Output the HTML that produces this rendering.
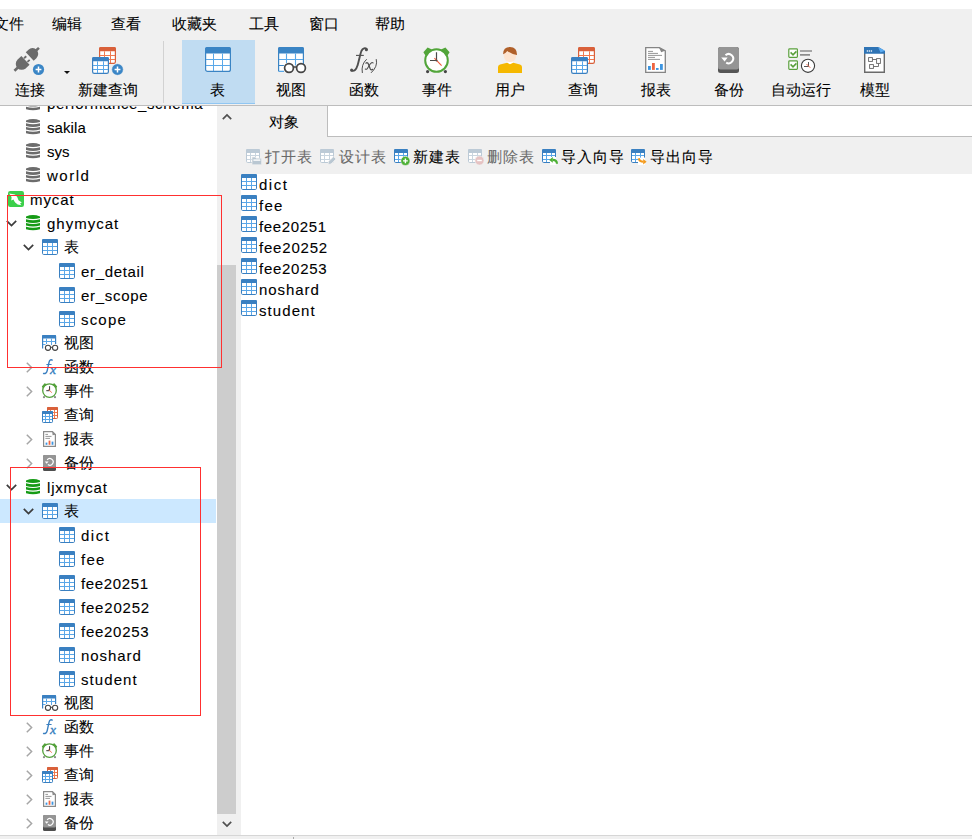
<!DOCTYPE html>
<html><head><meta charset="utf-8">
<style>
*{margin:0;padding:0;box-sizing:border-box}
html,body{width:972px;height:839px;overflow:hidden;background:#f0f0f0}
body{position:relative;font-family:"Liberation Sans",sans-serif;font-size:15px;color:#000}
.a{position:absolute}
.t{position:absolute;white-space:nowrap;line-height:20px;-webkit-text-stroke:0.08px currentColor}
.l{-webkit-text-stroke:0.1px currentColor}
svg{position:absolute;overflow:visible}
.g{color:#8a8a8a}
</style></head><body>

<svg width="0" height="0" style="left:0;top:0">
<defs>
<symbol id="tbl" viewBox="0 0 16 16" overflow="visible">
<rect x="0.5" y="0.5" width="15" height="15" rx="1.2" fill="#fff" stroke="#3a80c1"/>
<rect x="0" y="0" width="16" height="4" rx="1.2" fill="#3a80c1"/>
<path d="M5.5 4V15M10.5 4V15M1 7.5H15M1 11.5H15" stroke="#5aa7e8" stroke-width="1"/>
</symbol>
<symbol id="db" viewBox="0 0 14 16" overflow="visible">
<path d="M0 1.4 Q7 -1.4 14 1.4 V3 Q7 5 0 3 Z"/><path d="M0 4.3 Q7 6.3 14 4.3 V6.9 Q7 8.9 0 6.9 Z"/><path d="M0 8 Q7 10 14 8 V10.6 Q7 12.6 0 10.6 Z"/><path d="M0 11.7 Q7 13.7 14 11.7 V14.3 Q7 16.3 0 14.3 Z"/>
</symbol>
<symbol id="chd" viewBox="0 0 11 7" overflow="visible"><path d="M0.8 0.8L5.5 5.5L10.2 0.8" fill="none" stroke="#3c3c3c" stroke-width="1.7"/></symbol>
<symbol id="chr" viewBox="0 0 7 11" overflow="visible"><path d="M0.8 0.8L5.6 5.5L0.8 10.2" fill="none" stroke="#a6a6a6" stroke-width="1.5"/></symbol>
</defs></svg>

<div class="a" style="left:0;top:0;width:972px;height:9px;background:#fff"></div>
<div class="t" style="left:-6px;top:14px">文件</div>
<div class="t" style="left:52px;top:14px">编辑</div>
<div class="t" style="left:111px;top:14px">查看</div>
<div class="t" style="left:172px;top:14px">收藏夹</div>
<div class="t" style="left:249px;top:14px">工具</div>
<div class="t" style="left:309px;top:14px">窗口</div>
<div class="t" style="left:375px;top:14px">帮助</div>
<div class="a" style="left:182px;top:40px;width:73px;height:64px;background:#c0dcf2;border-bottom:1px solid #90c6f2"></div>
<div class="a" style="left:163px;top:41px;width:1px;height:62px;background:#d2d2d2"></div>
<div class="a" style="left:0;top:105px;width:972px;height:1px;background:#bdbdbd"></div>
<div class="t" style="left:15px;top:80px">连接</div>
<div class="t" style="left:78px;top:80px">新建查询</div>
<div class="t" style="left:210px;top:80px">表</div>
<div class="t" style="left:276px;top:80px">视图</div>
<div class="t" style="left:349px;top:80px">函数</div>
<div class="t" style="left:422px;top:80px">事件</div>
<div class="t" style="left:495px;top:80px">用户</div>
<div class="t" style="left:568px;top:80px">查询</div>
<div class="t" style="left:641px;top:80px">报表</div>
<div class="t" style="left:714px;top:80px">备份</div>
<div class="t" style="left:771px;top:80px">自动运行</div>
<div class="t" style="left:860px;top:80px">模型</div>
<svg style="left:10px;top:42px" width="40" height="36" viewBox="0 0 40 36">
<g fill="#6b6b6b">
<g transform="translate(17.6,16.4) rotate(-43)">
<path d="M2.9 -5.8 H6.6 A5.8 5.8 0 0 1 6.6 5.8 H2.9 Z"/>
<rect x="10.5" y="-1.3" width="5" height="2.6"/>
<path d="M-2.9 -6 H-8 A6 6 0 0 0 -8 6 H-2.9 Z"/>
<rect x="-2.5" y="-3.4" width="3" height="1.8"/>
<rect x="-2.5" y="1.6" width="3" height="1.8"/>
<rect x="-18" y="-1.3" width="5.5" height="2.6"/>
</g></g>
<circle cx="28.5" cy="27.5" r="5.6" fill="#3b86c6"/>
<path d="M25.6 27.5H31.4M28.5 24.6V30.4" stroke="#fff" stroke-width="1.5"/>
</svg>
<svg style="left:64px;top:71px" width="6" height="3" viewBox="0 0 6 3"><path d="M0 0H6L3 3Z" fill="#111"/></svg>
<svg style="left:99px;top:47px" width="17" height="17" viewBox="0 0 17 17"><rect x="0.6" y="0.6" width="15.8" height="15.8" rx="1.6" fill="#fff" stroke="#d9603a" stroke-width="1.2"/><path d="M0 4.3 V1.6 Q0 0 1.6 0 H15.4 Q17 0 17 1.6 V4.3 Z" fill="#d9603a"/><path d="M5.5 4.3 V16M11.5 4.3 V16M1 8.5 H16M1 12.5 H16" stroke="#f07a50" stroke-width="1"/></svg>
<svg style="left:92px;top:57px" width="17" height="17" viewBox="0 0 17 17"><rect x="0.6" y="0.6" width="15.8" height="15.8" rx="1.6" fill="#fff" stroke="#3a80c1" stroke-width="1.2"/><path d="M0 4.3 V1.6 Q0 0 1.6 0 H15.4 Q17 0 17 1.6 V4.3 Z" fill="#3a80c1"/><path d="M5.5 4.3 V16M11.5 4.3 V16M1 8.5 H16M1 12.5 H16" stroke="#5aa7e8" stroke-width="1"/></svg>
<svg style="left:111px;top:63px" width="13" height="13" viewBox="0 0 13 13"><circle cx="6.5" cy="6.5" r="5.8" fill="#3b86c6" stroke="#f0f0f0" stroke-width="0.6"/><path d="M3.6 6.5H9.4M6.5 3.6V9.4" stroke="#fff" stroke-width="1.5"/></svg>
<svg style="left:205px;top:47px" width="26" height="25" viewBox="0 0 26 25"><rect x="0.6" y="0.6" width="24.8" height="23.8" rx="2" fill="#fff" stroke="#3a84c4" stroke-width="1.2"/><path d="M0 6.5 V2 Q0 0 2 0 H24 Q26 0 26 2 V6.5 Z" fill="#3a84c4"/><path d="M8.5 6.5 V24M17.5 6.5 V24M1 12.5 H25M1 18.5 H25" stroke="#5aa8e8" stroke-width="1"/></svg>
<svg style="left:278px;top:47px" width="28" height="27" viewBox="0 0 28 27">
<path d="M0.6 6 H25.4 V18.5 H6 V24.4 H0.6Z" fill="#fff"/>
<path d="M0.6 24.4 V2 Q0.6 0.6 2 0.6 H24 Q25.4 0.6 25.4 2 V17.5" fill="none" stroke="#3a84c4" stroke-width="1.2"/>
<path d="M0 6.5 V2 Q0 0 2 0 H24 Q26 0 26 2 V6.5 Z" fill="#3a84c4"/>
<path d="M8.5 6.5 V16M17.5 6.5 V18.5M1 12.5 H25M1 18.5 H6 M1 24.4 H6" stroke="#5aa8e8" stroke-width="1.1"/>
<path d="M1 18.5 H5.5" stroke="#3a84c4" stroke-width="1"/>
<circle cx="11" cy="21" r="4.4" fill="#fff" stroke="#454545" stroke-width="1.7"/>
<circle cx="23" cy="21" r="4.4" fill="#fff" stroke="#454545" stroke-width="1.7"/>
<path d="M15.4 20 H18.6" stroke="#454545" stroke-width="1.5"/>
</svg>
<svg style="left:345px;top:42px" width="40" height="36" viewBox="0 0 40 36">
<g fill="none" stroke="#4e4e4e" stroke-linecap="round">
<path d="M21.8 7.2 C20.4 5.6 17.8 5.8 16.4 9 C15.2 12 13.7 20 12.5 23.6 C11.3 27.6 9.2 29.6 6.4 28.6" stroke-width="1.9"/>
<path d="M11 13.4 H18.8" stroke-width="1.1" stroke-linecap="butt"/>
<path d="M21.4 17.5 Q15.9 22.6 17.3 30.6" stroke-width="1"/>
<path d="M31.3 17.5 Q33 24.6 26.3 30.6" stroke-width="1"/>
<path d="M20.9 21.2 Q22.5 19.9 23.5 22.2 L25.2 26.8 Q26 28.6 27.9 27.3" stroke-width="1.25"/>
<path d="M28.1 20.9 Q26.7 19.9 25 22.3 L22.7 26 Q21.6 27.9 20.3 27" stroke-width="1.1"/>
</g>
<circle cx="21.4" cy="7.7" r="1.5" fill="#4e4e4e"/>
<circle cx="6.6" cy="28.1" r="1.5" fill="#4e4e4e"/>
</svg>
<svg style="left:424px;top:47px" width="26" height="26" viewBox="0 0 26 26">
<path d="M-0.6 5.2 L3.6 0.6 L8 2.6 L1.6 8.8Z M25.6 5.2 L21.4 0.6 L17 2.6 L23.4 8.8Z" fill="#52a53a"/>
<circle cx="3.6" cy="24.6" r="1.6" fill="#444"/><circle cx="21.4" cy="24.6" r="1.6" fill="#444"/>
<circle cx="12.5" cy="13.5" r="11.3" fill="#fff" stroke="#52a53a" stroke-width="2"/>
<path d="M12.5 5.2V13.5H6" fill="none" stroke="#4a4a4a" stroke-width="1.2"/>
<path d="M10.4 11.2L17.6 18.6" stroke="#f05a3c" stroke-width="1.1"/>
<circle cx="12.5" cy="13.5" r="1" fill="#4a4a4a"/>
</svg>
<svg style="left:490px;top:42px" width="40" height="36" viewBox="0 0 40 36">
<rect x="17.2" y="19" width="6" height="4" fill="#fff"/>
<path d="M8 31 V25 Q8 23.5 10 22.6 L17.2 20.8 L20 22.2 L23.2 20.8 L30 22.6 Q32 23.5 32 25 V31 Z" fill="#f5b800"/>
<ellipse cx="20" cy="13.5" rx="6.3" ry="6.6" fill="#fde4d0"/>
<path d="M13.1 12.2 Q13 4.9 20 4.9 Q27.2 5 27 12.9 Q21.6 12.4 17.3 9.1 Q15.6 11.4 13.1 12.2Z" fill="#b0602a"/>
</svg>
<svg style="left:578px;top:47px" width="17" height="17" viewBox="0 0 17 17"><rect x="0.6" y="0.6" width="15.8" height="15.8" rx="1.6" fill="#fff" stroke="#d9603a" stroke-width="1.2"/><path d="M0 4.3 V1.6 Q0 0 1.6 0 H15.4 Q17 0 17 1.6 V4.3 Z" fill="#d9603a"/><path d="M5.5 4.3 V16M11.5 4.3 V16M1 8.5 H16M1 12.5 H16" stroke="#f07a50" stroke-width="1"/></svg>
<svg style="left:571px;top:57px" width="17" height="17" viewBox="0 0 17 17"><rect x="0.6" y="0.6" width="15.8" height="15.8" rx="1.6" fill="#fff" stroke="#3a80c1" stroke-width="1.2"/><path d="M0 4.3 V1.6 Q0 0 1.6 0 H15.4 Q17 0 17 1.6 V4.3 Z" fill="#3a80c1"/><path d="M5.5 4.3 V16M11.5 4.3 V16M1 8.5 H16M1 12.5 H16" stroke="#5aa7e8" stroke-width="1"/></svg>
<svg style="left:645px;top:47px" width="21" height="26" viewBox="0 0 21 26">
<path d="M0.7 0.7 H14.4 L20.3 3.8 V25.3 H0.7 Z" fill="#fff" stroke="#858585" stroke-width="1.3"/>
<path d="M14 0.5 L20.6 3.6 L16.2 5.2 Z" fill="#858585"/>
<path d="M3 4.4H8M3 6.4H13M3 8.4H17M3 10.4H10M3 12.4H15" stroke="#8a8a8a" stroke-width="0.9"/>
<rect x="3" y="19" width="2.8" height="3.9" fill="#3d95e0"/>
<rect x="7" y="16" width="2.8" height="6.9" fill="#ef6440"/>
<rect x="11" y="21" width="2.6" height="1.9" fill="#3d95e0"/>
<rect x="15" y="17" width="2.8" height="5.9" fill="#3d95e0"/>
</svg>
<svg style="left:718px;top:47px" width="21" height="26" viewBox="0 0 21 26">
<rect x="0" y="0" width="21" height="26" rx="2.5" fill="#555"/>
<rect x="0" y="0" width="21" height="22.5" rx="2.5" fill="#959595"/>
<path d="M7.5 8.2 A4.6 4.6 0 1 1 8.2 15.6" fill="none" stroke="#fff" stroke-width="2"/>
<path d="M3.2 10.4 L9.6 10.4 L6.6 14.4Z" fill="#fff"/>
</svg>
<svg style="left:782px;top:42px" width="40" height="36" viewBox="0 0 40 36">
<rect x="6.8" y="6.8" width="8.6" height="8.6" rx="0.8" fill="#fff" stroke="#5aa03c" stroke-width="1.2"/>
<rect x="6.8" y="18.8" width="8.6" height="8.6" rx="0.8" fill="#fff" stroke="#5aa03c" stroke-width="1.2"/>
<path d="M8.6 10.4 L11 12.8 L14.4 9.4 M8.6 22.4 L11 24.8 L14.4 21.4" fill="none" stroke="#5aa03c" stroke-width="1.6"/>
<path d="M18 9 H30 M18 12.9 H28" stroke="#8c8c8c" stroke-width="1.6"/>
<circle cx="26" cy="23.8" r="6.6" fill="#fff" stroke="#3a3a3a" stroke-width="1.1"/>
<path d="M26.5 20 V24.5 H22" fill="none" stroke="#444" stroke-width="0.9"/>
<path d="M24.5 22 L28.3 25.8" stroke="#f05a3c" stroke-width="0.9"/>
</svg>
<svg style="left:864px;top:47px" width="21" height="26" viewBox="0 0 21 26">
<path d="M0.7 6 V25.3 H20.3 V6" fill="#fff" stroke="#6a6a6a" stroke-width="1.4"/>
<path d="M0 0 H14.5 L21 4 V6.8 H0 Z" fill="#2f74b5"/>
<path d="M14 0 L21 3.8 L16.5 5.5Z" fill="#5aaaf0"/>
<circle cx="3.4" cy="4" r="0.8" fill="#fff"/><circle cx="5.4" cy="4" r="0.8" fill="#fff"/><circle cx="7.4" cy="4" r="0.8" fill="#fff"/>
<rect x="4.6" y="10.6" width="3.8" height="3.8" fill="#fff" stroke="#666" stroke-width="0.9"/>
<rect x="12.6" y="11.6" width="3.8" height="4.8" fill="#fff" stroke="#666" stroke-width="0.9"/>
<rect x="5.6" y="17.6" width="3.8" height="3.8" fill="#fff" stroke="#666" stroke-width="0.9"/>
<path d="M8.5 12.5 H12.5 M14.5 16.4 V19.5 H9.5" fill="none" stroke="#666" stroke-width="0.9"/>
</svg>
<div class="a" style="left:0;top:106px;width:217px;height:729px;background:#fff"></div>
<svg width="0" height="0" style="left:0;top:0"><defs>
<symbol id="sview" viewBox="0 0 16 16" overflow="visible">
<path d="M0.6 13.4 V1.4 Q0.6 0.6 1.4 0.6 H13 Q13.6 0.6 13.6 1.4 V9" fill="none" stroke="#3a80c1" stroke-width="1.2"/>
<path d="M0 3.4 V1.2 Q0 0 1.2 0 H12.8 Q14 0 14 1.2 V3.4 Z" fill="#3a80c1"/>
<path d="M4.5 3.5V9M9.5 3.5V10M1 6.5H13.4M1 9.5H3.5" stroke="#5aa7e8" stroke-width="1"/>
<circle cx="6" cy="12.8" r="2.6" fill="#fff" stroke="#444" stroke-width="1.1"/>
<circle cx="13.1" cy="12.8" r="2.6" fill="#fff" stroke="#444" stroke-width="1.1"/>
<path d="M8.6 12.3 H10.5" stroke="#444" stroke-width="1"/>
</symbol>
<symbol id="sfx" viewBox="0 0 16 16" overflow="visible">
<path d="M10.6 1.4 C9.2 0 7.6 0.8 7 3.4 L5.2 11.6 C4.7 14 3.4 15 1 14.3" fill="none" stroke="#3a7fc0" stroke-width="1.4"/>
<path d="M4.4 5.5 H9.6" stroke="#3a7fc0" stroke-width="1"/>
<text x="8" y="14.6" font-family="Liberation Serif" font-style="italic" font-size="13.5" fill="#3a7fc0" stroke="#3a7fc0" stroke-width="0.35">x</text>
</symbol>
<symbol id="sclk" viewBox="0 0 16 16" overflow="visible">
<path d="M-0.2 3.4 L2.6 0.3 L5.4 1.4 L1.2 5.8Z M15.2 3.4 L12.4 0.3 L9.6 1.4 L13.8 5.8Z" fill="#52a03a"/>
<circle cx="2" cy="14.2" r="1.1" fill="#8a8a8a"/><circle cx="13" cy="14.2" r="1.1" fill="#8a8a8a"/>
<circle cx="7.5" cy="7.6" r="6.8" fill="#fff" stroke="#52a03a" stroke-width="1.3"/>
<path d="M7.6 3.2V7.7H4.3" fill="none" stroke="#333" stroke-width="1"/>
<path d="M6.4 6.4 L9.9 9.7" stroke="#f06a4a" stroke-width="0.9"/>
</symbol>
<symbol id="sqry" viewBox="0 0 16 16" overflow="visible">
<rect x="5.5" y="0.5" width="10" height="11" rx="0.8" fill="#fff" stroke="#d9603a"/>
<path d="M5 3 V0.8 Q5 0 5.8 0 H15.2 Q16 0 16 0.8 V3Z" fill="#d9603a"/>
<path d="M8.5 3V11M12.5 3V11M6 5.5H15M6 8.5H15" stroke="#f07a50" stroke-width="1"/>
<rect x="0.5" y="4.5" width="10" height="11" rx="0.8" fill="#fff" stroke="#3a80c1"/>
<path d="M0 7 V4.8 Q0 4 0.8 4 H10.2 Q11 4 11 4.8 V7Z" fill="#3a80c1"/>
<path d="M3.5 7V15M7.5 7V15M1 9.5H10M1 12.5H10" stroke="#5aa7e8" stroke-width="1"/>
</symbol>
<symbol id="srep" viewBox="0 0 16 16" overflow="visible"><g transform="translate(1,0)">
<path d="M0.6 0.6 H9.4 L12.4 3.6 V15.4 H0.6 Z" fill="#fff" stroke="#8a8a8a" stroke-width="1.2"/>
<path d="M9.2 0.6 L12.4 3.8 L9.6 4.2Z" fill="#8a8a8a"/>
<path d="M2.4 3.4H5M2.4 5.4H8.5M2.4 7.4H7" stroke="#8c8c8c" stroke-width="0.9"/>
<rect x="2.6" y="11.6" width="1.8" height="2.2" fill="#3d95e0"/>
<rect x="5.6" y="9.6" width="1.8" height="4.2" fill="#ef6440"/>
<rect x="8.6" y="10.6" width="1.8" height="3.2" fill="#3d95e0"/>
</g></symbol>
<symbol id="sbak" viewBox="0 0 16 16" overflow="visible"><g transform="translate(1,0)">
<rect x="0" y="0" width="13" height="16" rx="1.6" fill="#4e4e4e"/>
<rect x="0" y="0" width="13" height="12.6" rx="1.6" fill="#959595"/>
<path d="M4.2 4.9 A3.3 3.3 0 1 1 4.9 9.6" fill="none" stroke="#fff" stroke-width="1.2"/>
<path d="M1.8 6.4 L5.6 6.4 L3.7 8.8Z" fill="#fff"/>
</g></symbol>
<symbol id="mycat" viewBox="0 0 16 16" overflow="visible">
<rect x="0" y="0" width="16" height="16" rx="2.2" fill="#3bcf4a"/>
<path d="M1.2 2.4 Q4 2.6 7 3.6 Q9.5 5.6 10.5 9.2 L13.8 11.6 L12 12.4 L13.4 14.2 Q9 13.8 7.2 11.4 Q6 10 5.5 8.4 L3.2 9.6 L3.6 6.6 Q3 4.4 1.2 2.4Z" fill="#fff"/>
</symbol>
</defs></svg>
<div class="a" style="left:0;top:106px;width:217px;height:729px;overflow:hidden">
<svg style="left:26px;top:-11px" width="14" height="16" fill="#6c6c6c"><use href="#db"/></svg>
<div class="t l" style="left:47px;top:-12px;letter-spacing:0.62px">performance_schema</div>
<svg style="left:26px;top:13px" width="14" height="16" fill="#6c6c6c"><use href="#db"/></svg>
<div class="t l" style="left:47px;top:12px;letter-spacing:0.08px">sakila</div>
<svg style="left:26px;top:37px" width="14" height="16" fill="#6c6c6c"><use href="#db"/></svg>
<div class="t l" style="left:47px;top:36px;letter-spacing:0px">sys</div>
<svg style="left:26px;top:61px" width="14" height="16" fill="#6c6c6c"><use href="#db"/></svg>
<div class="t l" style="left:47px;top:60px;letter-spacing:1.52px">world</div>
<svg style="left:8px;top:85px" width="16" height="16"><use href="#mycat"/></svg>
<div class="t l" style="left:30px;top:84px;letter-spacing:0.93px">mycat</div>
<svg style="left:6px;top:114px" width="11" height="7"><use href="#chd"/></svg>
<svg style="left:26px;top:109px" width="14" height="16" fill="#169b16"><use href="#db"/></svg>
<div class="t l" style="left:47px;top:108px;letter-spacing:1.0px">ghymycat</div>
<svg style="left:23px;top:138px" width="11" height="7"><use href="#chd"/></svg>
<svg style="left:42px;top:133px" width="16" height="16"><use href="#tbl"/></svg>
<div class="t" style="left:64px;top:131px;letter-spacing:0px">表</div>
<svg style="left:59px;top:157px" width="16" height="16"><use href="#tbl"/></svg>
<div class="t l" style="left:81px;top:156px;letter-spacing:0.66px">er_detail</div>
<svg style="left:59px;top:181px" width="16" height="16"><use href="#tbl"/></svg>
<div class="t l" style="left:81px;top:180px;letter-spacing:0.7px">er_scope</div>
<svg style="left:59px;top:205px" width="16" height="16"><use href="#tbl"/></svg>
<div class="t l" style="left:81px;top:204px;letter-spacing:1.18px">scope</div>
<svg style="left:42px;top:229px" width="16" height="16"><use href="#sview"/></svg>
<div class="t" style="left:64px;top:227px;letter-spacing:0px">视图</div>
<svg style="left:26px;top:256px" width="7" height="11"><use href="#chr"/></svg>
<svg style="left:42px;top:253px" width="16" height="16"><use href="#sfx"/></svg>
<div class="t" style="left:64px;top:251px;letter-spacing:0px">函数</div>
<svg style="left:26px;top:280px" width="7" height="11"><use href="#chr"/></svg>
<svg style="left:42px;top:277px" width="16" height="16"><use href="#sclk"/></svg>
<div class="t" style="left:64px;top:275px;letter-spacing:0px">事件</div>
<svg style="left:42px;top:301px" width="16" height="16"><use href="#sqry"/></svg>
<div class="t" style="left:64px;top:299px;letter-spacing:0px">查询</div>
<svg style="left:26px;top:328px" width="7" height="11"><use href="#chr"/></svg>
<svg style="left:42px;top:325px" width="16" height="16"><use href="#srep"/></svg>
<div class="t" style="left:64px;top:323px;letter-spacing:0px">报表</div>
<svg style="left:26px;top:352px" width="7" height="11"><use href="#chr"/></svg>
<svg style="left:42px;top:349px" width="16" height="16"><use href="#sbak"/></svg>
<div class="t" style="left:64px;top:347px;letter-spacing:0px">备份</div>
<svg style="left:6px;top:378px" width="11" height="7"><use href="#chd"/></svg>
<svg style="left:26px;top:373px" width="14" height="16" fill="#169b16"><use href="#db"/></svg>
<div class="t l" style="left:47px;top:372px;letter-spacing:0.81px">ljxmycat</div>
<div class="a" style="left:0;top:393px;width:216px;height:24px;background:#cce8ff"></div>
<svg style="left:23px;top:402px" width="11" height="7"><use href="#chd"/></svg>
<svg style="left:42px;top:397px" width="16" height="16"><use href="#tbl"/></svg>
<div class="t" style="left:64px;top:395px;letter-spacing:0px">表</div>
<svg style="left:59px;top:421px" width="16" height="16"><use href="#tbl"/></svg>
<div class="t l" style="left:81px;top:420px;letter-spacing:1.53px">dict</div>
<svg style="left:59px;top:445px" width="16" height="16"><use href="#tbl"/></svg>
<div class="t l" style="left:81px;top:444px;letter-spacing:1.3px">fee</div>
<svg style="left:59px;top:469px" width="16" height="16"><use href="#tbl"/></svg>
<div class="t l" style="left:81px;top:468px;letter-spacing:0.63px">fee20251</div>
<svg style="left:59px;top:493px" width="16" height="16"><use href="#tbl"/></svg>
<div class="t l" style="left:81px;top:492px;letter-spacing:0.8px">fee20252</div>
<svg style="left:59px;top:517px" width="16" height="16"><use href="#tbl"/></svg>
<div class="t l" style="left:81px;top:516px;letter-spacing:0.73px">fee20253</div>
<svg style="left:59px;top:541px" width="16" height="16"><use href="#tbl"/></svg>
<div class="t l" style="left:81px;top:540px;letter-spacing:0.92px">noshard</div>
<svg style="left:59px;top:565px" width="16" height="16"><use href="#tbl"/></svg>
<div class="t l" style="left:81px;top:564px;letter-spacing:1.08px">student</div>
<svg style="left:42px;top:589px" width="16" height="16"><use href="#sview"/></svg>
<div class="t" style="left:64px;top:587px;letter-spacing:0px">视图</div>
<svg style="left:26px;top:616px" width="7" height="11"><use href="#chr"/></svg>
<svg style="left:42px;top:613px" width="16" height="16"><use href="#sfx"/></svg>
<div class="t" style="left:64px;top:611px;letter-spacing:0px">函数</div>
<svg style="left:26px;top:640px" width="7" height="11"><use href="#chr"/></svg>
<svg style="left:42px;top:637px" width="16" height="16"><use href="#sclk"/></svg>
<div class="t" style="left:64px;top:635px;letter-spacing:0px">事件</div>
<svg style="left:26px;top:664px" width="7" height="11"><use href="#chr"/></svg>
<svg style="left:42px;top:661px" width="16" height="16"><use href="#sqry"/></svg>
<div class="t" style="left:64px;top:659px;letter-spacing:0px">查询</div>
<svg style="left:26px;top:688px" width="7" height="11"><use href="#chr"/></svg>
<svg style="left:42px;top:685px" width="16" height="16"><use href="#srep"/></svg>
<div class="t" style="left:64px;top:683px;letter-spacing:0px">报表</div>
<svg style="left:26px;top:712px" width="7" height="11"><use href="#chr"/></svg>
<svg style="left:42px;top:709px" width="16" height="16"><use href="#sbak"/></svg>
<div class="t" style="left:64px;top:707px;letter-spacing:0px">备份</div>
</div>
<div class="a" style="left:217px;top:106px;width:24px;height:729px;background:#f0f0f0"></div>
<div class="a" style="left:217px;top:265px;width:19px;height:549px;background:#cdcdcd"></div>
<svg style="left:222px;top:113px" width="10" height="7" viewBox="0 0 10 7"><path d="M0.8 6.2L5 2L9.2 6.2" fill="none" stroke="#505050" stroke-width="1.7"/></svg>
<svg style="left:222px;top:821px" width="10" height="7" viewBox="0 0 10 7"><path d="M0.8 0.8L5 5L9.2 0.8" fill="none" stroke="#505050" stroke-width="1.7"/></svg>
<div class="a" style="left:327px;top:106px;width:645px;height:31px;background:#fff;border-left:1px solid #bdbdbd;border-bottom:1px solid #bdbdbd"></div>
<div class="t" style="left:269px;top:112px">对象</div>
<svg style="left:246px;top:149px" width="16" height="16" viewBox="0 0 16 16"><rect x="0.5" y="0.5" width="13" height="13" rx="1.2" fill="#fff" stroke="#bccad6"/><path d="M0 4 V1.2 Q0 0 1.2 0 H12.8 Q14 0 14 1.2 V4Z" fill="#bccad6"/><path d="M4.5 4V13M9.5 4V13M1 6.5H13M1 10.5H13" stroke="#c9d5df" stroke-width="1"/><path d="M6 8 H9.2 L10.2 9.2 H15.6 V15.8 H6Z" fill="#b9c7d2" stroke="#f0f0f0" stroke-width="0.7"/><path d="M7.4 10.4 H14.4 V11.8 H7.4Z" fill="#fff"/></svg>
<svg style="left:320px;top:149px" width="16" height="16" viewBox="0 0 16 16"><rect x="0.5" y="0.5" width="13" height="13" rx="1.2" fill="#fff" stroke="#bccad6"/><path d="M0 4 V1.2 Q0 0 1.2 0 H12.8 Q14 0 14 1.2 V4Z" fill="#bccad6"/><path d="M4.5 4V13M9.5 4V13M1 6.5H13M1 10.5H13" stroke="#c9d5df" stroke-width="1"/><path d="M8 15.6 L8.6 12.6 L13.6 7.6 L16 10 L11 15 Z" fill="#b9c7d2" stroke="#f0f0f0" stroke-width="0.8"/></svg>
<svg style="left:394px;top:149px" width="16" height="16" viewBox="0 0 16 16"><rect x="0.5" y="0.5" width="13" height="13" rx="1.2" fill="#fff" stroke="#3a80c1"/><path d="M0 4 V1.2 Q0 0 1.2 0 H12.8 Q14 0 14 1.2 V4Z" fill="#3a80c1"/><path d="M4.5 4V13M9.5 4V13M1 6.5H13M1 10.5H13" stroke="#5aa7e8" stroke-width="1"/><circle cx="11.4" cy="11.9" r="4.6" fill="#4cb034" stroke="#f0f0f0" stroke-width="0.6"/><path d="M9 11.9H13.8M11.4 9.5V14.3" stroke="#fff" stroke-width="1.4"/></svg>
<svg style="left:468px;top:149px" width="16" height="16" viewBox="0 0 16 16"><rect x="0.5" y="0.5" width="13" height="13" rx="1.2" fill="#fff" stroke="#bccad6"/><path d="M0 4 V1.2 Q0 0 1.2 0 H12.8 Q14 0 14 1.2 V4Z" fill="#bccad6"/><path d="M4.5 4V13M9.5 4V13M1 6.5H13M1 10.5H13" stroke="#c9d5df" stroke-width="1"/><circle cx="11.5" cy="11.5" r="4.5" fill="#e6c3c3" stroke="#f0f0f0" stroke-width="0.6"/><path d="M9.2 11.5H13.8" stroke="#fff" stroke-width="1.4"/></svg>
<svg style="left:542px;top:149px" width="16" height="16" viewBox="0 0 16 16"><rect x="0.5" y="0.5" width="13" height="13" rx="1.2" fill="#fff" stroke="#3a80c1"/><path d="M0 4 V1.2 Q0 0 1.2 0 H12.8 Q14 0 14 1.2 V4Z" fill="#3a80c1"/><path d="M4.5 4V13M9.5 4V13M1 6.5H13M1 10.5H13" stroke="#5aa7e8" stroke-width="1"/><path d="M8 8 H14 V16 H8Z" fill="#fff"/><path d="M15 14.8 Q14.8 10.9 10.8 10.9" fill="none" stroke="#4cb034" stroke-width="2.1"/><path d="M7.2 10.9 L10.8 8 L10.8 13.8Z" fill="#4cb034"/></svg>
<svg style="left:631px;top:149px" width="16" height="16" viewBox="0 0 16 16"><rect x="0.5" y="0.5" width="13" height="13" rx="1.2" fill="#fff" stroke="#3a80c1"/><path d="M0 4 V1.2 Q0 0 1.2 0 H12.8 Q14 0 14 1.2 V4Z" fill="#3a80c1"/><path d="M4.5 4V13M9.5 4V13M1 6.5H13M1 10.5H13" stroke="#5aa7e8" stroke-width="1"/><path d="M7 8.6 H14 V16 H7Z" fill="#fff"/><path d="M7.8 9.2 Q8.4 12.7 12.4 12.7" fill="none" stroke="#f39a1d" stroke-width="2.1"/><path d="M15.6 12.7 L12.2 9.9 L12.2 15.6Z" fill="#f39a1d"/></svg>
<div class="t" style="left:265px;top:147px;color:#6a6a6a;letter-spacing:1px">打开表</div>
<div class="t" style="left:339px;top:147px;color:#6a6a6a;letter-spacing:1px">设计表</div>
<div class="t" style="left:413px;top:147px;color:#000;letter-spacing:1px">新建表</div>
<div class="t" style="left:487px;top:147px;color:#6a6a6a;letter-spacing:1px">删除表</div>
<div class="t" style="left:561px;top:147px;color:#000;letter-spacing:1px">导入向导</div>
<div class="t" style="left:650px;top:147px;color:#000;letter-spacing:1px">导出向导</div>
<div class="a" style="left:241px;top:174px;width:731px;height:661px;background:#fff"></div>
<svg style="left:241px;top:174px" width="16" height="16"><use href="#tbl"/></svg>
<div class="t l" style="left:259px;top:175px;letter-spacing:1.53px">dict</div>
<svg style="left:241px;top:195px" width="16" height="16"><use href="#tbl"/></svg>
<div class="t l" style="left:259px;top:196px;letter-spacing:1.3px">fee</div>
<svg style="left:241px;top:216px" width="16" height="16"><use href="#tbl"/></svg>
<div class="t l" style="left:259px;top:217px;letter-spacing:0.63px">fee20251</div>
<svg style="left:241px;top:237px" width="16" height="16"><use href="#tbl"/></svg>
<div class="t l" style="left:259px;top:238px;letter-spacing:0.8px">fee20252</div>
<svg style="left:241px;top:258px" width="16" height="16"><use href="#tbl"/></svg>
<div class="t l" style="left:259px;top:259px;letter-spacing:0.73px">fee20253</div>
<svg style="left:241px;top:279px" width="16" height="16"><use href="#tbl"/></svg>
<div class="t l" style="left:259px;top:280px;letter-spacing:0.92px">noshard</div>
<svg style="left:241px;top:300px" width="16" height="16"><use href="#tbl"/></svg>
<div class="t l" style="left:259px;top:301px;letter-spacing:1.08px">student</div>
<div class="a" style="left:0;top:835px;width:972px;height:4px;background:#f0f0f0;border-top:1px solid #d6d6d6"></div>
<div class="a" style="left:293px;top:837px;width:1px;height:2px;background:#aaa"></div>
<div class="a" style="left:7px;top:195px;width:215px;height:173px;border:1px solid #ff3030"></div>
<div class="a" style="left:10px;top:467px;width:191px;height:249px;border:1px solid #ff3030"></div>
</body></html>
